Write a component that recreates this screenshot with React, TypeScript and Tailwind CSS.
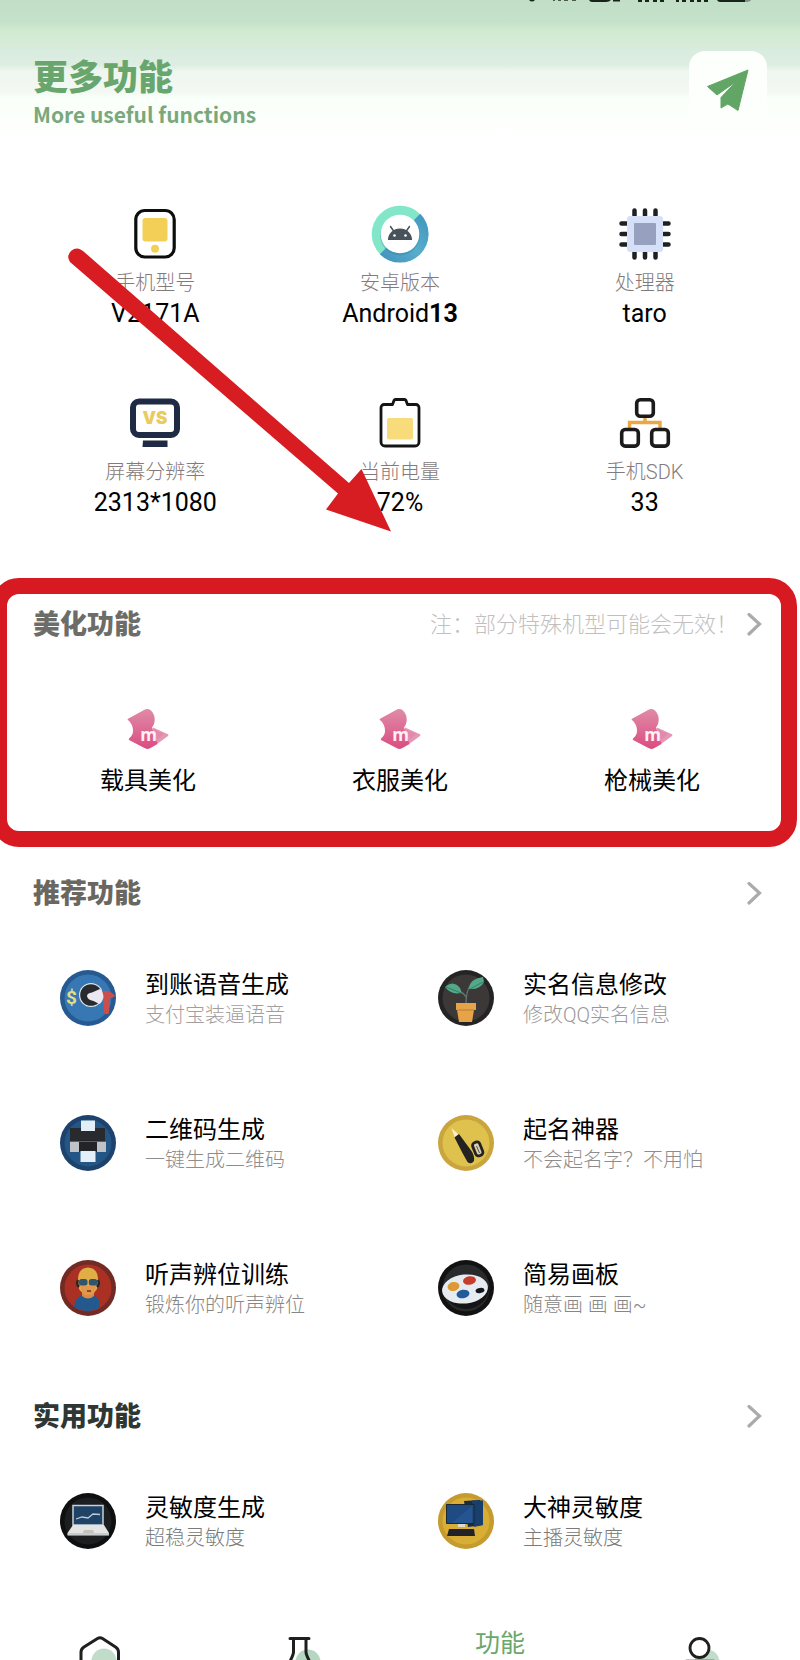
import React from "react";

type IconProps = { className?: string };

function PhoneIcon() {
  return (
    <svg width="56" height="56" viewBox="0 0 56 56" aria-hidden="true">
      <rect x="8.800" y="4.500" width="38.400" height="46.500" rx="9" fill="#fff" stroke="#0c0d0d" strokeWidth="3.200" />
      <rect x="15.500" y="12" width="25" height="23.500" rx="3" fill="#f3cf58" />
      <circle cx="28" cy="42.800" r="4" fill="#f3cf58" />
    </svg>
  );
}

function AndroidIcon() {
  return (
    <svg width="58" height="58" viewBox="0 0 58 58" aria-hidden="true">
      <defs>
        <linearGradient id="ring" x1="1" y1="0" x2="0" y2="1">
          <stop offset="0" stopColor="#3f93bd" />
          <stop offset=".5" stopColor="#57aecb" />
          <stop offset="1" stopColor="#4290bd" />
        </linearGradient>
      </defs>
      <circle cx="29" cy="29" r="28.300" fill="#82e6c9" />
      <path d="M49.200 8.800A28.500 28.500 0 0 1 8.800 49.200Z" fill="url(#ring)" />
      <circle cx="29" cy="30.500" r="19.800" fill="#2e7f9d" opacity=".35" />
      <circle cx="29" cy="29" r="19.300" fill="#fff" />
      <path d="M17 35a12 11.500 0 0 1 24 0Z" fill="#475259" />
      <path d="M19.500 21.500l3.500 5M38.500 21.500l-3.500 5" stroke="#475259" strokeWidth="1.500" strokeLinecap="round" />
      <circle cx="23.500" cy="30.500" r="1.300" fill="#fff" />
      <circle cx="34.500" cy="30.500" r="1.300" fill="#fff" />
    </svg>
  );
}

function ChipIcon() {
  return (
    <svg width="56" height="56" viewBox="0 0 56 56" aria-hidden="true">
      <path
        d="M17.500 4.500v5M28 4.500v5M38.500 4.500v5M17.500 46.500v5M28 46.500v5M38.500 46.500v5M4.500 17.500h5M4.500 28h5M4.500 38.500h5M46.500 17.500h5M46.500 28h5M46.500 38.500h5"
        stroke="#1d2024"
        strokeWidth="4.500"
        strokeLinecap="round"
      />
      <rect x="10" y="10" width="36" height="36" rx="3" fill="#d5dff8" />
      <rect x="17" y="17" width="22" height="22" rx="1" fill="#98a0bf" />
    </svg>
  );
}

function MonitorIcon() {
  return (
    <svg width="56" height="56" viewBox="0 0 56 56" aria-hidden="true">
      <rect x="6" y="6.500" width="44" height="33.500" rx="6" fill="#fff" stroke="#1f2b45" strokeWidth="6" />
      <path d="M16 45.500h24.500v6.500H15.500Z" fill="#1f2b45" />
      <text x="28" y="29" textAnchor="middle" fontFamily="Inter, sans-serif" fontWeight="900" fontSize="17" fill="#eacb5c">
        VS
      </text>
    </svg>
  );
}

function BatteryIcon() {
  return (
    <svg width="56" height="56" viewBox="0 0 56 56" aria-hidden="true">
      <path
        d="M12 9.500h8.500l1.500-4a2 2 0 0 1 1.500-1h9a2 2 0 0 1 1.500 1l1.500 4H44a3 3 0 0 1 3 3V47a4 4 0 0 1-4 4H13a4 4 0 0 1-4-4V12.500a3 3 0 0 1 3-3Z"
        fill="#fff"
        stroke="#141414"
        strokeWidth="2.800"
        strokeLinejoin="round"
      />
      <rect x="15" y="23" width="26" height="21.500" rx="2" fill="#f8db7b" />
    </svg>
  );
}

function NetworkIcon() {
  return (
    <svg width="56" height="56" viewBox="0 0 56 56" aria-hidden="true">
      <path d="M12.500 36v-8.500h30.500V36M28 27.500v-6" fill="none" stroke="#e9a845" strokeWidth="3.400" />
      <g fill="#fff" stroke="#1b1b1b" strokeWidth="3.600">
        <rect x="19.700" y="4.700" width="16.600" height="16.600" rx="3.500" />
        <rect x="4.700" y="34.500" width="16.600" height="16.600" rx="3.500" />
        <rect x="34.700" y="34.500" width="16.600" height="16.600" rx="3.500" />
      </g>
    </svg>
  );
}

function PetalIcon() {
  return (
    <svg width="44" height="44" viewBox="0 0 44 44" aria-hidden="true">
      <defs>
        <linearGradient id="petal" x1="0" y1="0" x2="0" y2="1">
          <stop offset="0" stopColor="#e08ba8" />
          <stop offset="1" stopColor="#da4c80" />
        </linearGradient>
      </defs>
      <path d="M27 20.500L42 27.200Q43 28 42 29L31 37L23 34Z" fill="#e497b5" />
      <path
        d="M1.500 12.500Q1.500 12 2.500 11.500L18 3Q21.500 1 25 3.500Q29.500 8 28.500 15Q28 18 26 20.500L31.500 37L24 41.300Q21.500 42.500 19 41.300L3 33Q2.300 32 3.500 31Q7 28 7 24Q7 17 1.500 12.500Z"
        fill="url(#petal)"
      />
      <path d="M28 22l10 5l-7 6z" fill="#e28aac" />
      <text x="22.500" y="33.500" textAnchor="middle" fontFamily="Open Sans, sans-serif" fontWeight="700" fontSize="17" fill="#fff0f5">
        m
      </text>
    </svg>
  );
}

function Disc({ outer, inner, children }: { outer: string; inner: string; children: React.ReactNode }) {
  return (
    <svg className="shrink-0" width="56" height="56" viewBox="0 0 56 56" aria-hidden="true">
      <circle cx="28" cy="28" r="28" fill={outer} />
      <circle cx="28" cy="28" r="23.500" fill={inner} />
      {children}
    </svg>
  );
}

function VoiceIcon() {
  return (
    <Disc outer="#265a91" inner="#3778b4">
      <text x="11.500" y="34" textAnchor="middle" fontFamily="Roboto, sans-serif" fontWeight="700" fontSize="19" fill="#e3dc88">
        $
      </text>
      <circle cx="31" cy="25" r="12" fill="#dce3e9" />
      <circle cx="31" cy="25" r="10.800" fill="#292a2d" />
      <path d="M40 22q6-2 9-.5q5 2 6 5l-5 2l-1 15q-3 2-5-1l-1-13Z" fill="#c94e4d" />
      <path d="M27 26q0-3 5-3.500l8-3.500q3 2 3.500 8q-1 5-4 7l-6-3q-6-1-6.500-5Z" fill="#ece8f1" />
    </Disc>
  );
}

function PlantIcon() {
  return (
    <Disc outer="#252424" inner="#3c3838">
      <path d="M28 34q0-12 4-18M28 27q-3-5-8-6" fill="none" stroke="#62796f" strokeWidth="1.300" />
      <path d="M7 17q6-6 12-2q5 4 4 8q-10 2-16-6Z" fill="#53a88b" />
      <path d="M31 19q0-10 14-12l1 5q-4 8-15 7Z" fill="#53a88b" />
      <path d="M8 17l15 6M32 19l13-7" stroke="#34806a" strokeWidth="1" />
      <path d="M18 33h20v7h-2l-2 12H21l-2-12h-1Z" fill="#e7a348" />
      <path d="M19 40h17" stroke="#ba7c32" strokeWidth="1" />
    </Disc>
  );
}

function PrinterIcon() {
  return (
    <Disc outer="#1c426d" inner="#235685">
      <path d="M10 13h35v14H10Z" fill="#292a2d" />
      <path d="M10 26h36v11H10Z" fill="#bfc3c8" />
      <path d="M19 25h18v12H19Z" fill="#222428" />
      <path d="M21 5.500h14V16H21ZM20.500 36h15v11h-15Z" fill="#e4eef8" />
      <path d="M10 26.500h36" stroke="#5b5f65" strokeWidth="1" />
    </Disc>
  );
}

function PenIcon() {
  return (
    <Disc outer="#caa43c" inner="#dfc14d">
      <path d="M13.500 13l7 6.500l-4 2.500Z" fill="#faf0cf" />
      <path d="M16.500 22.500l4.500-3.500L32 34q5 6 4 12q-3 4-6.500 1L25 39Z" fill="#252321" />
      <rect x="36" y="27" width="7.500" height="14" rx="3" fill="#d9d1b0" stroke="#252321" strokeWidth="2.800" transform="rotate(-22 39.500 34)" />
      <path d="M38.500 31l3 7" stroke="#55504a" strokeWidth="1" />
    </Disc>
  );
}

function ListenerIcon() {
  return (
    <Disc outer="#722a24" inner="#aa3024">
      <path d="M14 47q1-11 10-12h8q8 1 8 12q-12 8-26 0Z" fill="#23598f" />
      <path d="M22 28h12v8q-6 5-12 0Z" fill="#d98948" />
      <path d="M18 20q0-12 10-12.500Q38 8 38 20v6q-2 8-10 8t-10-8Z" fill="#dfae47" />
      <path d="M20 25q8 2 16 0q0 8-4 10h-7q-4-2-5-10Z" fill="#e1984d" />
      <path d="M18 20q-2 4 1 7M38 20q2 4-1 7" stroke="#29272a" strokeWidth="2.500" fill="none" />
      <rect x="19" y="19" width="8.500" height="6.500" rx="2.500" fill="#31556c" />
      <rect x="28.800" y="19" width="8.500" height="6.500" rx="2.500" fill="#31556c" />
      <path d="M27 31h4" stroke="#702a24" strokeWidth="1.500" />
    </Disc>
  );
}

function PaletteIcon() {
  return (
    <Disc outer="#121212" inner="#292a2b">
      <path d="M5 30a23.500 23.500 0 0 0 46.500-3Z" fill="#151515" />
      <ellipse cx="27" cy="29" rx="23" ry="14.500" fill="#e6eaf1" transform="rotate(-6 27 29)" />
      <ellipse cx="15.500" cy="26.500" rx="6" ry="4.500" fill="#dd9a34" transform="rotate(-12 15.500 26.500)" />
      <ellipse cx="31.500" cy="20.500" rx="6.500" ry="4.300" fill="#c43d2d" transform="rotate(-8 31.500 20.500)" />
      <ellipse cx="25" cy="34" rx="6.500" ry="4.300" fill="#225b99" transform="rotate(-8 25 34)" />
      <ellipse cx="42" cy="30.500" rx="4.500" ry="2.600" fill="#14171a" transform="rotate(-10 42 30.500)" />
    </Disc>
  );
}

function LaptopIcon() {
  return (
    <Disc outer="#0e0f10" inner="#1d1e1f">
      <rect x="13" y="12.500" width="30" height="19.500" fill="#1f4367" stroke="#c8d0d8" strokeWidth="1.500" />
      <path d="M16 26l6-2l6 1l5-4l7 .5" fill="none" stroke="#b9cbda" strokeWidth="1.300" />
      <path d="M13 32h31l5 8v2.500H7.500V40Z" fill="#e3e4e4" />
      <path d="M24 37h9l1 3H23Z" fill="#c5c2ba" />
      <path d="M7.500 41h41.500" stroke="#afb1b3" strokeWidth="1.200" />
    </Disc>
  );
}

function DesktopIcon() {
  return (
    <Disc outer="#c69b2d" inner="#d9ae35">
      <path d="M26 8l16-1l3 25l-15 2Z" fill="#1b2c3d" />
      <path d="M34 7.500h11V32l-9 2Z" fill="#193f6c" />
      <path d="M8.500 11.500h27.500v19H8.500Z" fill="#1e4b82" stroke="#1b2733" strokeWidth="1" />
      <path d="M14 30L34 13v17Z" fill="#255590" />
      <path d="M20 31h7v3h-7Z" fill="#e0dcc9" />
      <path d="M11 36h25l1 7H9Z" fill="#222326" />
    </Disc>
  );
}

function Chevron({ className }: IconProps) {
  return (
    <svg className={className} width="16" height="24" viewBox="0 0 16 24" fill="none" aria-hidden="true">
      <path d="M3 1.500L13.500 11L3 21" stroke="currentColor" strokeWidth="3.200" strokeLinecap="round" />
    </svg>
  );
}

function StatusGlyphs() {
  return (
    <svg className="block" width="226" height="4" viewBox="0 0 226 4" fill="#18231b" aria-hidden="true">
      <path d="M0 0h6q-3 3-6 0Z" />
      <path d="M24 0h2v1h-2ZM29 0h3v1h-3ZM35 0h4v1h-4ZM43 0h4v1h-4Z" opacity=".7" />
      <path d="M60 0h22q-2 2-5 2H63q-2 0-3-2ZM84 0h7v1.500h-7Z" />
      <path d="M109 0h4v2h-4ZM116 0h4v2h-4ZM124 0h4v2h-4ZM131 0h4v2h-4ZM147 0h3v2h-3ZM153 0h4v2h-4ZM161 0h4v2h-4ZM168 0h4v2h-4ZM175 0h4v2h-4Z" />
      <path d="M188 0h28v2h-25q-2 0-3-2Z" />
      <path d="M216 0h6q-1 2-6 2Z" opacity=".4" />
    </svg>
  );
}

const stats: { label: string; value: React.ReactNode; icon: React.ReactNode }[] = [
  { label: "手机型号", value: "V2171A", icon: <PhoneIcon /> },
  { label: "安卓版本", value: <>Android<b>13</b></>, icon: <AndroidIcon /> },
  { label: "处理器", value: "taro", icon: <ChipIcon /> },
  { label: "屏幕分辨率", value: "2313*1080", icon: <MonitorIcon /> },
  { label: "当前电量", value: "72%", icon: <BatteryIcon /> },
  { label: "手机SDK", value: "33", icon: <NetworkIcon /> },
];

type Feature = { title: string; note: string; icon: React.ReactNode; tone: string };

const recommended: Feature[] = [
  { title: "到账语音生成", note: "支付宝装逼语音", icon: <VoiceIcon />, tone: "text-[#a29d9e]" },
  { title: "实名信息修改", note: "修改QQ实名信息", icon: <PlantIcon />, tone: "text-[#9a9898]" },
  { title: "二维码生成", note: "一键生成二维码", icon: <PrinterIcon />, tone: "text-[#8e8c8c]" },
  { title: "起名神器", note: "不会起名字？不用怕", icon: <PenIcon />, tone: "text-[#8e8c8c]" },
  { title: "听声辨位训练", note: "锻炼你的听声辨位", icon: <ListenerIcon />, tone: "text-[#868686]" },
  { title: "简易画板", note: "随意画 画 画~", icon: <PaletteIcon />, tone: "text-[#868686]" },
];

const practical: Feature[] = [
  { title: "灵敏度生成", note: "超稳灵敏度", icon: <LaptopIcon />, tone: "text-[#7a7a7a]" },
  { title: "大神灵敏度", note: "主播灵敏度", icon: <DesktopIcon />, tone: "text-[#7a7a7a]" },
];

function SectionHeading({ title, tone, note }: { title: string; tone: string; note?: string }) {
  return (
    <div className="flex h-8 items-center justify-between pr-[38px] pl-[33px]">
      <h2 className={`text-[27px] leading-8 font-black ${tone}`}>{title}</h2>
      <button type="button" aria-label={`查看${title}`} className="flex items-center gap-2 text-[#ababab]">
        {note && <span className="text-[22px] leading-8 font-light text-[#c3bfc0]">{note}</span>}
        <Chevron />
      </button>
    </div>
  );
}

function FeatureGrid({ items }: { items: Feature[] }) {
  return (
    <div className="mt-[60px] grid grid-cols-2 gap-y-[89px] px-[22px]">
      {items.map((item) => (
        <a key={item.title} href="#" className="flex h-14 items-center gap-[29px] pl-[38px]">
          {item.icon}
          <span className="flex flex-col gap-[2px] whitespace-nowrap">
            <span className="text-2xl leading-8 text-black">{item.title}</span>
            <span className={`text-xl leading-6 font-light ${item.tone}`}>{item.note}</span>
          </span>
        </a>
      ))}
    </div>
  );
}

export default function App() {
  return (
    <div className="relative overflow-hidden bg-white font-['Roboto','Noto_Sans_CJK_SC',sans-serif]">
      <header className="bg-[linear-gradient(180deg,#c1dec6_0px,#c5e1c9_22px,#d1ead1_30px,#d5ebd6_42px,#d9ece0_52px,#deede2_65px,#eef6ef_71px,#f3f8f3_92px,#f9fff9_98px,#fcfffc_120px,#ffffff_140px)] pb-4">
        <div className="flex justify-end pr-[45px]">
          <StatusGlyphs />
        </div>
        <div className="flex items-start justify-between px-[33px] pt-[47px]">
          <div className="pt-1 font-['Noto_Sans_CJK_SC',sans-serif]">
            <h1 className="text-[35px] leading-10 font-black text-[#69a66d]">更多功能</h1>
            <p className="mt-[5px] text-[21px] leading-7 font-bold text-[#79a87c]">More useful functions</p>
          </div>
          <button type="button" aria-label="分享" className="flex h-[77px] w-[78px] items-center justify-center rounded-2xl bg-[#fcfffc]">
            <svg width="44" height="44" viewBox="0 0 44 44" aria-hidden="true">
              <path
                d="M42 2L1.500 18.500L11 27L29.500 14L15 29.500V40L20 37Q21.500 35.500 23.500 37L32 42.500Z"
                fill="#61a665"
                stroke="#61a665"
                strokeWidth="1"
                strokeLinejoin="round"
              />
            </svg>
          </button>
        </div>
      </header>

      <main>
        <section aria-label="设备信息" className="mt-[62px] grid grid-cols-3 gap-y-[67px] px-[33px]">
          {stats.map((s) => (
            <div key={s.label} className="flex flex-col items-center">
              <div className="flex h-14 items-center">{s.icon}</div>
              <div className="mt-[9px] text-xl leading-6 font-light text-[#857a7b]">{s.label}</div>
              <div className="mt-[5px] text-[25px] leading-7 text-black">{s.value}</div>
            </div>
          ))}
        </section>

        <section className="relative mt-[92px]">
          <SectionHeading title="美化功能" tone="text-[#6c6d68]" note="注：部分特殊机型可能会无效！" />
          <div className="mt-[66px] grid grid-cols-3 px-[22px]">
            {["载具美化", "衣服美化", "枪械美化"].map((name) => (
              <a key={name} href="#" className="flex flex-col items-center gap-[14px] text-2xl leading-8 text-black">
                <PetalIcon />
                {name}
              </a>
            ))}
          </div>
          <div className="pointer-events-none absolute -top-[31px] right-[3px] -bottom-[50px] -left-[9px] rounded-[28px] border-16 border-[#d71a21]" />
        </section>

        <section className="mt-[81px]">
          <SectionHeading title="推荐功能" tone="text-[#69675f]" />
          <FeatureGrid items={recommended} />
        </section>

        <section className="mt-[85px]">
          <SectionHeading title="实用功能" tone="text-[#2f3734]" />
          <FeatureGrid items={practical} />
        </section>
      </main>

      <nav aria-label="主导航" className="mt-[71px] grid grid-cols-4 items-start pt-2">
        <a href="#" aria-label="首页" className="flex justify-center pt-[7px]">
          <svg width="44" height="27" viewBox="0 0 44 27" fill="none" aria-hidden="true">
            <circle cx="26" cy="26" r="12.500" fill="#c2dccb" />
            <path d="M3 28V17q0-3 3-5L19.500 3.500q2.500-1.500 5 0L37.500 12q3 2 3 5v11" stroke="#1e1f1f" strokeWidth="3" />
            <path d="M18 26.500h9" stroke="#4d8460" strokeWidth="2" />
          </svg>
        </a>
        <a href="#" aria-label="实验室" className="flex justify-center pt-[7px]">
          <svg width="44" height="27" viewBox="0 0 44 27" fill="none" aria-hidden="true">
            <circle cx="30" cy="27" r="12.500" fill="#b5d6c0" />
            <path d="M12 3.500h19M15.500 4v13q0 3-4.500 11M28 4v13q0 3 4.500 11" stroke="#1e1f1f" strokeWidth="3" strokeLinecap="round" />
            <path d="M23 26.500h9" stroke="#2f5a42" strokeWidth="2" />
          </svg>
        </a>
        <a href="#" aria-current="page" className="text-center text-[25px] leading-8 text-[#6aa76c]">
          功能
        </a>
        <a href="#" aria-label="我的" className="flex justify-center pt-[7px]">
          <svg width="44" height="27" viewBox="0 0 44 27" fill="none" aria-hidden="true">
            <circle cx="29" cy="27" r="12.500" fill="#c2dccb" />
            <circle cx="21.500" cy="13" r="9.500" fill="#fff" stroke="#1e1f1f" strokeWidth="2.800" />
            <path d="M8 26.500h28" stroke="#1e1f1f" strokeWidth="3.500" strokeLinecap="round" />
          </svg>
        </a>
      </nav>

      <svg className="pointer-events-none absolute top-[248px] left-[66px]" width="328" height="286" viewBox="0 0 328 286" aria-hidden="true">
        <path d="M14.500 1.500Q10 -1 5 3Q0 8 4 14L272 245.500L260 261.500L325 283.500L295.500 221L283 235L17 3Z" fill="#d71c22" />
      </svg>
    </div>
  );
}
